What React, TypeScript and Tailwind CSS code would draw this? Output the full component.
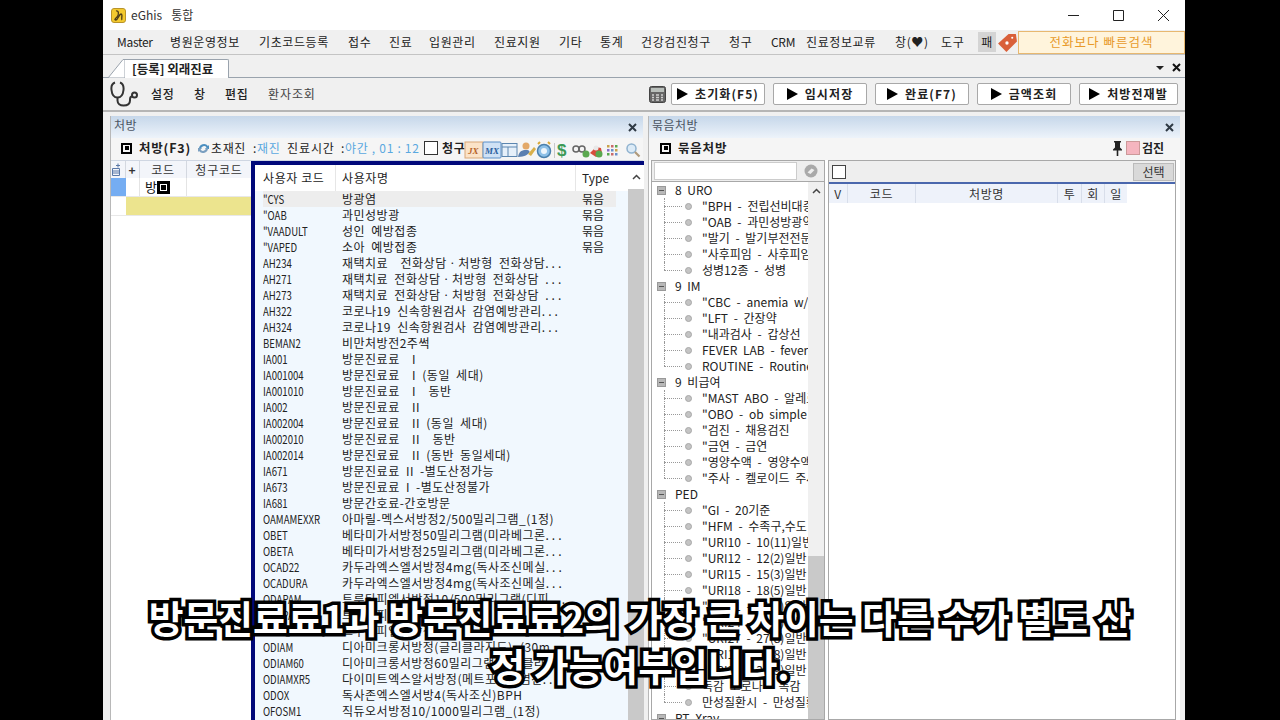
import React from 'react';

const menus = [
  { label: 'Master', w: 'w-[53px]' },
  { label: '병원운영정보', w: 'w-[89px]' },
  { label: '기초코드등록', w: 'w-[89px]' },
  { label: '접수', w: 'w-[41px]' },
  { label: '진료', w: 'w-[40px]' },
  { label: '입원관리', w: 'w-[65px]' },
  { label: '진료지원', w: 'w-[65px]' },
  { label: '기타', w: 'w-[41px]' },
  { label: '통계', w: 'w-[41px]' },
  { label: '건강검진청구', w: 'w-[88px]' },
  { label: '청구', w: 'w-[42px]' },
  { label: 'CRM', w: 'w-[35px]' },
  { label: '진료정보교류', w: 'w-[89px]' },
  { label: '창(♥)', w: 'w-[46px]' },
  { label: '도구', w: 'w-[37px]' },
];

const buttons = ['초기화(F5)', '임시저장', '완료(F7)', '금액조회', '처방전재발'];

const rows = [
  ['"CYS', '방광염', '묶음'],
  ['"OAB', '과민성방광', '묶음'],
  ['"VAADULT', '성인 예방접종', '묶음'],
  ['"VAPED', '소아 예방접종', '묶음'],
  ['AH234', '재택치료  전화상담ㆍ처방형 전화상담...'],
  ['AH271', '재택치료 전화상담ㆍ처방형 전화상담 ...'],
  ['AH273', '재택치료 전화상담ㆍ처방형 전화상담 ...'],
  ['AH322', '코로나19 신속항원검사 감염예방관리...'],
  ['AH324', '코로나19 신속항원검사 감염예방관리...'],
  ['BEMAN2', '비만처방전2주썩'],
  ['IA001', '방문진료료  I'],
  ['IA001004', '방문진료료  I (동일 세대)'],
  ['IA001010', '방문진료료  I  동반'],
  ['IA002', '방문진료료  II'],
  ['IA002004', '방문진료료  II (동일 세대)'],
  ['IA002010', '방문진료료  II  동반'],
  ['IA002014', '방문진료료  II (동반 동일세대)'],
  ['IA671', '방문진료료 II -별도산정가능'],
  ['IA673', '방문진료료 I -별도산정불가'],
  ['IA681', '방문간호료-간호방문'],
  ['OAMAMEXXR', '아마릴-멕스서방정2/500밀리그램_(1정)'],
  ['OBET', '베타미가서방정50밀리그램(미라베그론...'],
  ['OBETA', '베타미가서방정25밀리그램(미라베그론...'],
  ['OCAD22', '카두라엑스엘서방정4mg(독사조신메실...'],
  ['OCADURA', '카두라엑스엘서방정4mg(독사조신메실...'],
  ['ODAPAM', '트루타피엘서방정10/500밀리그램(디피...'],
  ['ODAPA', '트루타피엘서방정'],
  ['ODAPL', '트루타피엘서방정'],
  ['ODIAM', '디아미크롱서방정(글리클라지드)_(30m...'],
  ['ODIAM60', '디아미크롱서방정60밀리그램(글리클라...'],
  ['ODIAMXR5', '다이미트엑스알서방정(메트포르민염산...'],
  ['ODOX', '독사존엑스엘서방4(독사조신)BPH'],
  ['OFOSM1', '직듀오서방정10/1000밀리그램_(1정)'],
];

const tree: [boolean, string][] = [
  [true, '8 URO'],
  [false, '"BPH - 전립선비대증'],
  [false, '"OAB - 과민성방광약'],
  [false, '"발기 - 발기부전전문'],
  [false, '"사후피임 - 사후피임'],
  [false, '성병12종 - 성병'],
  [true, '9 IM'],
  [false, '"CBC - anemia w/u'],
  [false, '"LFT - 간장약'],
  [false, '"내과검사 - 갑상선'],
  [false, 'FEVER LAB - feverlab'],
  [false, 'ROUTINE - Routine'],
  [true, '9 비급여'],
  [false, '"MAST ABO - 알레르기'],
  [false, '"OBO - ob simple'],
  [false, '"검진 - 채용검진'],
  [false, '"금연 - 금연'],
  [false, '"영양수액 - 영양수액'],
  [false, '"주사 - 켈로이드 주사'],
  [true, 'PED'],
  [false, '"GI - 20기준'],
  [false, '"HFM - 수족구,수도'],
  [false, '"URI10 - 10(11)일반'],
  [false, '"URI12 - 12(2)일반'],
  [false, '"URI15 - 15(3)일반'],
  [false, '"URI18 - 18(5)일반'],
  [false, '"URI21 - 21(6)일반'],
  [false, '"URI24 - 24(7)일반'],
  [false, '"URI27 - 27(8)일반'],
  [false, '"URI13 - 13(8)일반'],
  [false, '"URI30 - 30(9)일반'],
  [false, '독감 코로나 - 독감'],
  [false, '만성질환시 - 만성질환'],
  [true, 'PT Xray'],
];

function BoxMark() {
  return <span className="inline-block shrink-0 w-[11px] h-[11px] border-2 border-black relative after:content-[''] after:absolute after:left-[1.5px] after:top-[1.5px] after:w-[4px] after:h-[4px] after:bg-black" />;
}

function Logo() {
  return (
    <svg width="15" height="15" viewBox="0 0 15 15">
      <rect x="0.5" y="0.5" width="14" height="14" rx="2.5" fill="#f3c92e" stroke="#b8932a" />
      <path d="M5 3c3-1 3 4 1 6s-3 3-1 3 3-6 5-6 0 5 1 6" fill="none" stroke="#4a3a18" strokeWidth="1.3" />
    </svg>
  );
}

function Stethoscope() {
  return (
    <svg width="30" height="26" viewBox="0 0 30 26" fill="none" stroke="#333" strokeWidth="2">
      <path d="M5 1.500C2 2.500 1 5 1.500 9c.5 5 3 7.500 6 7.500s5.500-2.500 6-7.500c.4-4-.5-6.500-3.500-7.500" />
      <path d="M7.500 16.500v3c0 3 2.500 5 6 5s6.500-1.500 6.500-5v-1c0-2 1-3 2-3" />
      <circle cx="24.500" cy="14" r="2.500" />
    </svg>
  );
}

function Calculator() {
  return (
    <svg width="17" height="17" viewBox="0 0 17 17">
      <rect x="0.5" y="0.5" width="16" height="16" rx="2" fill="#666" stroke="#444" />
      <rect x="2" y="2" width="13" height="4" fill="#b9bfbb" />
      <path d="M3 9h2M7 9h3M12 9h2M3 11.500h2M7 11.500h3M12 11.500h2M3 14h2M7 14h3M12 14h2" stroke="#cfcfcf" strokeWidth="1.300" />
    </svg>
  );
}

function ToolIcons() {
  return (
    <div className="absolute left-[353px] top-[24px] flex items-center h-[20px]">
      <svg width="158" height="20" viewBox="0 0 158 20">
        <rect x="1" y="2" width="18" height="16" fill="#fbe3c8" stroke="#d9a878" />
        <text x="4" y="14" fontSize="9" fontStyle="italic" fontWeight="700" fill="#b5642a" fontFamily="Liberation Serif, serif">JX</text>
        <g transform="translate(-5 0)">
          <rect x="24" y="2" width="18" height="16" rx="1" fill="#cfe1f5" stroke="#5b8fc8" />
          <text x="26" y="14" fontSize="9" fontStyle="italic" fontWeight="700" fill="#2c5f9e" fontFamily="Liberation Serif, serif">MX</text>
        </g>
        <g transform="translate(-8 0)">
          <rect x="46" y="3.500" width="15" height="13" fill="#e6f0fa" stroke="#5c86b0" />
          <path d="M46 7h15M52 7v9" stroke="#5c86b0" />
        </g>
        <g transform="translate(-10 0)">
          <circle cx="72" cy="6" r="3.500" fill="#e3a868" />
          <path d="M64 17c1-6 4-7 8-7s4 2 3 3-4 4-11 4z" fill="#5a7fb0" />
          <path d="M74 14l6-7 2 2-5 7z" fill="#d9b04a" />
        </g>
        <g transform="translate(-12 0)">
          <circle cx="92" cy="11" r="6.500" fill="#8ec1e8" stroke="#4a80ad" strokeWidth="1.500" />
          <circle cx="92" cy="11" r="3" fill="#eef6fc" />
          <path d="M86 4l2-2M96 2l2 2" stroke="#d9a838" strokeWidth="2" />
          <path d="M102.500 3v15" stroke="#c8c8c8" />
          <text x="105" y="16" fontSize="17" fontWeight="700" fill="#3d9a57" fontFamily="Liberation Sans, sans-serif">$</text>
        </g>
        <g transform="translate(-10 0)">
          <circle cx="122" cy="9" r="3" fill="none" stroke="#666" strokeWidth="1.500" />
          <circle cx="128" cy="9" r="3" fill="none" stroke="#666" strokeWidth="1.500" />
          <circle cx="132" cy="14" r="3.500" fill="#5aa84f" />
        </g>
        <g transform="translate(-13 0)">
          <path d="M139 13l6-6 5 1 1 5-6 4z" fill="#d84c3c" />
          <circle cx="148" cy="14" r="3.500" fill="#5aa84f" />
          <circle cx="145" cy="8" r="2.500" fill="#e8e8e8" />
        </g>
        <g transform="translate(-12 0)">
          <rect x="155" y="5" width="2.500" height="2.500" fill="#c9a24a" />
          <rect x="155" y="9" width="2.500" height="2.500" fill="#8a6ac9" />
          <rect x="155" y="13" width="2.500" height="2.500" fill="#5aa84f" />
          <rect x="159" y="5" width="2.500" height="2.500" fill="#c96a6a" />
          <rect x="159" y="9" width="2.500" height="2.500" fill="#6a8fc9" />
          <rect x="159" y="13" width="2.500" height="2.500" fill="#c96a6a" />
          <rect x="163" y="5" width="2.500" height="2.500" fill="#5aa84f" />
          <rect x="163" y="9" width="2.500" height="2.500" fill="#c9a24a" />
          <rect x="163" y="13" width="2.500" height="2.500" fill="#6a8fc9" />
        </g>
      </svg>
      <svg className="ml-[3px]" width="16" height="16" viewBox="0 0 16 16">
        <circle cx="6.500" cy="6.500" r="4.500" fill="#dcebf7" stroke="#8fb2cf" strokeWidth="1.500" />
        <path d="M10 10l4.500 4.500" stroke="#b09a7c" strokeWidth="2.200" />
      </svg>
    </div>
  );
}

function PanelHeader({ title }: { title: string }) {
  return (
    <div className="h-[22px] shrink-0 flex items-center justify-between pl-[3px] pr-[6px] bg-gradient-to-b from-[#c6d7ea] to-[#edf3fa] text-[12px] text-[#4b5563] tracking-[0.5px]">
      <span className="mb-[4px]">{title}</span>
      <svg width="9" height="9" viewBox="0 0 9 9" stroke="#2f3a45" strokeWidth="2">
        <path d="M1 1l7 7M8 1l-7 7" />
      </svg>
    </div>
  );
}

function RowName({ text }: { text: string }) {
  if (!text.endsWith('...')) return <span className="overflow-hidden tracking-[0.5px] [word-spacing:3px]">{text}</span>;
  return (
    <span className="overflow-hidden tracking-[0.5px] [word-spacing:3px]">
      {text.slice(0, -3)}
      <span className="tracking-[3px]">...</span>
    </span>
  );
}

function PrescribePanel() {
  return (
    <div className="relative w-[533px] flex flex-col bg-white border-l border-[#b8b8b8]">
      <PanelHeader title="처방" />
      <div className="h-[22px] shrink-0 flex items-center bg-[#f5f5f5] text-[12px] text-[#222] pl-[10px] pb-[2px] whitespace-nowrap tracking-[0.6px]">
        <BoxMark />
        <span className="ml-[7px] w-[58px] font-bold tracking-[0.8px] text-[12.500px]">처방(F3)</span>
        <svg width="13" height="13" viewBox="0 0 13 13">
          <path d="M2 7a5 5 0 0 1 9-3l1-1v4H8l1.500-1.500A3 3 0 0 0 4 7z" fill="#4c8fc0" />
          <path d="M11 6a5 5 0 0 1-9 3l-1 1V6h4L3.500 7.500A3 3 0 0 0 9 6z" fill="#7a9fc0" />
        </svg>
        <span className="ml-[1px] w-[42px]">초재진</span>
        <span className="w-[4px]">:</span>
        <span className="w-[30px] text-[#5aa8e0]">재진</span>
        <span className="w-[54px] tracking-[0.9px]">진료시간</span>
        <span className="w-[4px]">:</span>
        <span className="w-[79px] text-[#5aa8e0] tracking-[0.7px] whitespace-pre">야간 , 01 : 12</span>
        <span className="w-[14px] h-[14px] border border-[#333] bg-white shrink-0" />
        <span className="ml-[4px] font-bold">청구</span>
      </div>
      <ToolIcons />
      <div className="h-[18px] shrink-0 flex text-[12px] text-[#333] bg-[#f3f5fa] border-t border-[#cfd6e2] tracking-[0.8px]">
        <div className="w-[15px] border-r border-[#d4d8e0] flex items-center justify-center">
          <svg width="12" height="13" viewBox="0 0 12 13" stroke="#5a78a8" fill="none">
            <path d="M.5 5.500h7v7h-7zM.5 8h7M.5 10h7M6 .5v4M4 2.500h4" />
          </svg>
        </div>
        <div className="w-[14px] border-r border-[#d4d8e0] flex items-center justify-center font-bold">+</div>
        <div className="w-[47px] border-r border-[#d4d8e0] flex items-center justify-center">코드</div>
        <div className="w-[64px] flex items-center justify-center">청구코드</div>
      </div>
      <div className="h-[19px] shrink-0 flex text-[13px] text-[#111] border-b border-[#e8e8e8]">
        <div className="w-[15px] bg-[#75adf2]" />
        <div className="w-[14px] border-r border-[#e4e4e4]" />
        <div className="w-[47px] border-r border-[#e4e4e4] flex items-center pl-[5px]">
          방<span className="w-[13px] h-[13px] bg-black flex items-center justify-center">
            <span className="w-[7px] h-[7px] border border-white" />
          </span>
        </div>
      </div>
      <div className="h-[19px] shrink-0 flex border-b border-[#e8e8e8]">
        <div className="w-[15px] bg-white" />
        <div className="flex-1 bg-[#ece48e]" />
      </div>
      <div className="flex-1 bg-white" />

      <div className="absolute left-[140px] top-[45px] w-[393px] bottom-0 border-t-[4px] border-l-[4px] border-[#00087a] bg-white flex text-[12px] text-[#222]">
        <div className="w-[373px] flex flex-col">
          <div className="h-[26px] shrink-0 flex items-center bg-white pl-[8px] tracking-[0.6px]">
            <span className="w-[72px] whitespace-nowrap">사용자 코드</span>
            <span className="w-[1px] h-[26px] bg-[#e6e6e6]" />
            <span className="w-[239px] pl-[6px]">사용자명</span>
            <span className="w-[1px] h-[26px] bg-[#e6e6e6]" />
            <span className="pl-[6px] tracking-normal">Type</span>
          </div>
          <div className="flex-1 bg-[#f1f8fe]">
            {rows.map((r, i) => (
              <div key={r[0]} className={'h-[16px] grid grid-cols-[79px_240px_1fr] items-center ml-[8px] mr-[12px] leading-[16px] whitespace-pre ' + (i === 0 ? 'bg-[#ededed]' : '')}>
                <span className="origin-left scale-x-[0.8] w-[98px]">{r[0]}</span>
                <RowName text={r[1]} />
                <span>{r[2]}</span>
              </div>
            ))}
          </div>
        </div>
        <div className="w-[16px] flex flex-col bg-[#c9c9c9]">
          <div className="h-[24px] bg-white flex items-center justify-center">
            <svg width="9" height="6" viewBox="0 0 9 6" fill="none" stroke="#444" strokeWidth="1.500">
              <path d="M1 5l3.500-3.500L8 5" />
            </svg>
          </div>
        </div>
      </div>
    </div>
  );
}

function TreePane() {
  return (
    <div className="w-[174px] flex flex-col border border-[#a8a8a8]">
      <div className="h-[21px] shrink-0 flex items-center bg-[#eeeeee] pl-[2px] border-b border-[#a8a8a8]">
        <div className="w-[143px] h-[18px] bg-white border border-[#cccccc]" />
        <svg className="ml-[7px]" width="14" height="14" viewBox="0 0 14 14">
          <circle cx="7" cy="7" r="6.500" fill="#a9a9a9" />
          <path d="M3.500 8.500l4-4 3 1.500-4 4z" fill="#eee" />
        </svg>
      </div>
      <div className="flex-1 flex overflow-hidden bg-white text-[12px] text-[#222]">
        <div className="w-[156px] shrink-0 overflow-hidden whitespace-nowrap [word-spacing:3px]">
          {tree.map(([group, label], i) =>
            group ? (
              <div key={i} className="h-[16px] flex items-center pl-[5px] leading-[16px]">
                <span className="shrink-0 w-[9px] h-[9px] bg-[#b8b8b8] border border-[#999] flex items-center justify-center mr-[9px]">
                  <span className="w-[5px] h-[1px] bg-[#555]" />
                </span>
                {label}
              </div>
            ) : (
              <div key={i} className="h-[16px] flex items-center pl-[12px] leading-[16px] relative">
                <span className={'absolute left-[12px] top-0 border-l border-dotted border-[#999] ' + (tree[i + 1] && tree[i + 1][0] ? 'h-[8px]' : 'h-[16px]')} />
                <span className="shrink-0 w-[18px] border-t border-dotted border-[#999]" />
                <span className="shrink-0 ml-[3px] w-[7px] h-[7px] rounded-full bg-[#c4c4c4] border border-[#a8a8a8]" />
                <span className="shrink-0 ml-[10px]">{label}</span>
              </div>
            )
          )}
        </div>
        <div className="w-[16px] flex flex-col bg-[#f0f0f0]">
          <div className="h-[18px] flex items-center justify-center">
            <svg width="9" height="6" viewBox="0 0 9 6" fill="none" stroke="#444" strokeWidth="1.500">
              <path d="M1 5l3.500-3.500L8 5" />
            </svg>
          </div>
          <div className="h-[356px]" />
          <div className="flex-1 bg-[#c9c9c9]" />
        </div>
      </div>
    </div>
  );
}

function ListPane() {
  return (
    <div className="ml-[3px] w-[348px] flex flex-col border border-[#a8a8a8]">
      <div className="h-[21px] shrink-0 flex items-center justify-between bg-[#eeeeee] pl-[3px] pr-[1px]">
        <span className="w-[14px] h-[14px] bg-white border border-[#444]" />
        <span className="w-[41px] h-[18px] bg-[#d9d9d9] border border-[#bbb] flex items-center justify-center text-[12px] text-[#333]">선택</span>
      </div>
      <div className="h-[2px] shrink-0 bg-[#4a67ad]" />
      <div className="h-[19px] shrink-0 flex text-[12px] text-[#333] bg-white tracking-[0.6px]">
        <div className="w-[19px] bg-[#eef2fa] border-r border-[#d8deea] flex items-center justify-center">V</div>
        <div className="w-[68px] bg-[#eef2fa] border-r border-[#d8deea] flex items-center justify-center">코드</div>
        <div className="w-[142px] bg-[#eef2fa] border-r border-[#d8deea] flex items-center justify-center">처방명</div>
        <div className="w-[24px] bg-[#eef2fa] border-r border-[#d8deea] flex items-center justify-center">투</div>
        <div className="w-[23px] bg-[#eef2fa] border-r border-[#d8deea] flex items-center justify-center">회</div>
        <div className="w-[22px] bg-[#eef2fa] flex items-center justify-center">일</div>
      </div>
      <div className="flex-1 bg-white" />
    </div>
  );
}

function BundlePanel() {
  return (
    <div className="w-[531px] flex flex-col bg-white">
      <PanelHeader title="묶음처방" />
      <div className="h-[22px] shrink-0 flex items-center bg-[#f5f5f5] text-[12px] text-[#222] pl-[11px] pr-[16px] pb-[2px]">
        <BoxMark />
        <span className="ml-[7px] font-bold text-[12.500px] tracking-[0.8px]">묶음처방</span>
        <svg className="ml-auto" width="11" height="16" viewBox="0 0 11 16" fill="#222">
          <path d="M2 1h7v1.500H8v5l2 2v1H6.300V16h-1.600v-5.500H1v-1l2-2v-5H2z" />
        </svg>
        <span className="ml-[3px] w-[14px] h-[14px] bg-[#f5b5bf] border border-[#c99]" />
        <span className="ml-[2px] font-bold">검진</span>
      </div>
      <div className="flex-1 flex pl-[2px] pr-[4px] min-h-0">
        <TreePane />
        <ListPane />
      </div>
    </div>
  );
}

export default function App() {
  return (
    <div className="relative w-[1280px] h-[720px] overflow-hidden bg-black flex font-['Noto_Sans_CJK_KR','Liberation_Sans',sans-serif]">
      <div className="ml-[103px] w-[1082px] h-[720px] flex flex-col bg-[#f0f0f0]">
        {/* title bar */}
        <div className="h-[30px] shrink-0 bg-white flex items-center pl-[8px] text-[12px] text-[#333]">
          <Logo />
          <span className="ml-[5px]">eGhis</span>
          <span className="ml-[9px]">통합</span>
          <svg className="ml-auto" width="108" height="14" viewBox="0 0 108 14" fill="none" stroke="#222">
            <path d="M0 7.500h11M45.500 2.500h10v10h-10zM90 2l11 11M101 2l-11 11" />
          </svg>
          <span className="w-[9px]" />
        </div>
        {/* menu bar */}
        <div className="h-[25px] shrink-0 flex items-center pl-[14px] text-[12px] text-[#222] whitespace-nowrap border-b border-[#c4c4c4] tracking-[0.6px]">
          {menus.map(m => (
            <span key={m.label} className={m.w + (m.label === 'Master' || m.label === 'CRM' ? ' tracking-[-0.3px]' : '')}>{m.label}</span>
          ))}
          <span className="w-[18px] h-[20px] bg-[#d4d4d4] flex items-center justify-center">패</span>
          <svg className="ml-[1px] shrink-0" width="21" height="21" viewBox="0 0 20 20">
            <path d="M1 11L11 2l7 0 1 7-10 10z" fill="#d9603a" />
            <circle cx="9.500" cy="10.500" r="1.600" fill="#fff" />
            <circle cx="14.500" cy="5.500" r="1" fill="#fff" />
          </svg>
          <div className="w-[167px] h-[23px] bg-[#fff4dc] border border-[#e8b870] flex items-center justify-center text-[#e89a2a] text-[12.500px] tracking-[1px]">전화보다 빠른검색</div>
        </div>
        {/* tab strip */}
        <div className="h-[23px] shrink-0 flex items-end pl-[5px] pr-[3px] border-b border-[#9aa3ad] relative">
          <svg width="17" height="19" viewBox="0 0 17 19" fill="#ffffff" stroke="#9aa3ad" className="mb-[-1px]">
            <path d="M0 19L15 .5h2V19z" />
          </svg>
          <div className="w-[104px] h-[19px] mb-[-1px] bg-white border-t border-r border-[#9aa3ad] rounded-tr-[2px] flex items-center text-[12.500px] font-bold text-[#222] pl-[7px] leading-none">
            [등록] 외래진료
          </div>
          <div className="ml-auto flex items-center gap-[8px] h-[19px] pr-[1px]">
            <span className="w-0 h-0 border-l-[4px] border-r-[4px] border-t-[4px] border-l-transparent border-r-transparent border-t-[#222]" />
            <svg width="9" height="9" viewBox="0 0 9 9" stroke="#111" strokeWidth="2">
              <path d="M1 1l7 7M8 1l-7 7" />
            </svg>
          </div>
        </div>
        {/* toolbar */}
        <div className="h-[34px] shrink-0 flex items-center pl-[7px] pr-[7px] border-b-2 border-[#b5b5b5] text-[12px] text-[#222] whitespace-nowrap tracking-[0.6px]">
          <Stethoscope />
          <span className="ml-[11px] w-[43px] font-medium">설정</span>
          <span className="w-[31px] font-medium">창</span>
          <span className="w-[43px] font-medium">편집</span>
          <span className="text-[#444] tracking-[0.9px]">환자조회</span>
          <div className="ml-auto flex items-center gap-[8px]">
            <span className="mr-[-3px]"><Calculator /></span>
            {buttons.map((b, i) => (
              <div key={b} className={'h-[22px] flex items-center justify-center bg-white border border-[#a8a8a8] rounded-[2px] font-bold tracking-[1.1px] ' + (i === 4 ? 'w-[99px]' : 'w-[94px]')}>
                <span className="mr-[7px] w-0 h-0 border-y-[6px] border-l-[11px] border-y-transparent border-l-black" />
                {b}
              </div>
            ))}
          </div>
        </div>
        {/* panels */}
        <div className="flex-1 flex min-h-0 pt-[4px] pl-[7px]">
          <PrescribePanel />
          <div className="w-[6px] shrink-0 border-r border-[#b8b8b8]" />
          <BundlePanel />
        </div>
      </div>
      {/* subtitle */}
      <div className="absolute left-0 right-0 top-[593px] flex flex-col items-center text-white font-bold text-[37.800px] leading-[48px] whitespace-nowrap [-webkit-text-stroke:7px_black] [paint-order:stroke_fill]">
        <span>방문진료료1과 방문진료료2의 가장 큰 차이는 다른 수가 별도 산</span>
        <span>정 가능여부입니다.</span>
      </div>
    </div>
  );
}
